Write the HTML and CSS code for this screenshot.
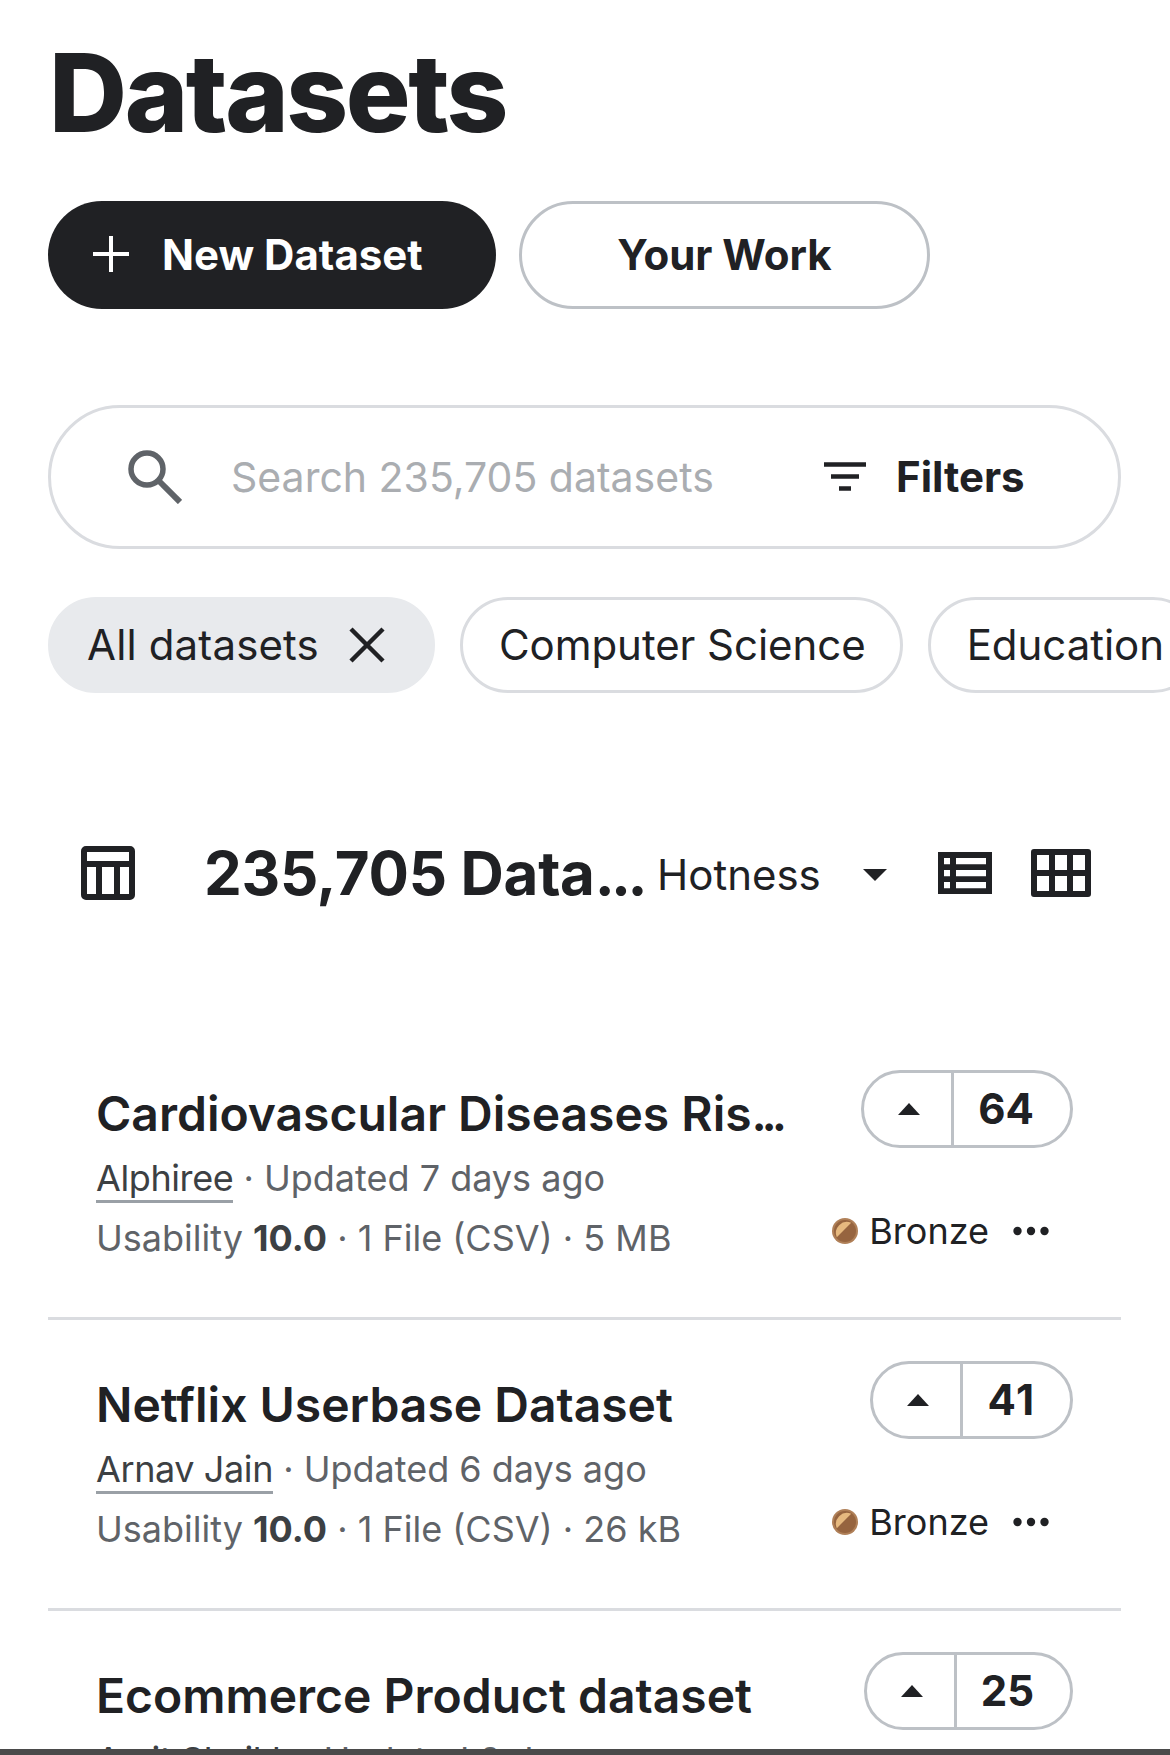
FILE: index.html
```html
<!DOCTYPE html>
<html lang="en">
<head>
<meta charset="utf-8">
<title>Datasets</title>
<link rel="stylesheet" href="styles.css">
</head>
<body>
<main class="page">
  <h1 class="page-title">Datasets</h1>
  <div class="actions">
    <button class="btn btn-primary">
      <svg class="btn-icon" viewBox="0 0 36 36"><path d="M18 0v36M0 18h36" fill="none" stroke="#fff" stroke-width="4"/></svg>
      New Dataset
    </button>
    <button class="btn btn-outline">Your Work</button>
  </div>
  <div class="search">
    <svg class="search-icon" viewBox="0 0 54 54"><circle cx="19" cy="19" r="16" fill="none" stroke="#5f6368" stroke-width="5.500"/><path d="M30.500 30.500L52 52" stroke="#5f6368" stroke-width="6" fill="none"/></svg>
    <span class="search-placeholder">Search 235,705 datasets</span>
    <span class="filters">
      <svg class="filter-icon" viewBox="0 0 42 30"><path d="M0 2.500h42M7 14.500h28M15 26.500h12" stroke="#202124" stroke-width="4.500" fill="none"/></svg>
      <span class="filters-label">Filters</span>
    </span>
  </div>
  <div class="chips">
    <span class="chip chip-active"><span class="chip-label">All datasets</span>
      <svg class="chip-x" viewBox="0 0 36 36"><path d="M2 2l32 32M34 2L2 34" stroke="#202124" stroke-width="4.500" fill="none"/></svg>
    </span>
    <span class="chip"><span class="chip-label">Computer Science</span></span>
    <span class="chip"><span class="chip-label">Education</span></span>
  </div>
  <div class="results-bar">
    <svg class="table-icon" viewBox="0 0 54 54"><path fill-rule="evenodd" d="M5 0h44a5 5 0 0 1 5 5v44a5 5 0 0 1-5 5H5a5 5 0 0 1-5-5V5a5 5 0 0 1 5-5zM6 6v9h42V6zM6 21v27h9V21zM21 21v27h12V21zM39 21v27h9V21z" fill="#202124"/></svg>
    <h2 class="results-title">235,705 Data<span class="dots-tight">...</span></h2>
    <span class="sort">Hotness</span>
    <svg class="sort-arrow" viewBox="0 0 24 12"><path d="M0 0h24L12 12z" fill="#202124"/></svg>
    <svg class="list-icon" viewBox="0 0 54 42"><path fill-rule="evenodd" d="M0 0h54v42H0zM6 6v6.300h6V6zM18 6v6.300h30V6zM6 18v6.300h6V18zM18 18v6.300h30V18zM6 30v6.300h6V30zM18 30v6.300h30V30z" fill="#202124"/></svg>
    <svg class="grid-icon" viewBox="0 0 60 48"><path fill-rule="evenodd" d="M3 0h54a3 3 0 0 1 3 3v42a3 3 0 0 1-3 3H3a3 3 0 0 1-3-3V3a3 3 0 0 1 3-3zM6 6v15h12V6zM24 6v15h12V6zM42 6v15h12V6zM6 27v15h12V27zM24 27v15h12V27zM42 27v15h12V27z" fill="#202124"/></svg>
  </div>
  <ul class="list">
    <li class="row">
      <div class="row-main">
        <div class="row-title">Cardiovascular Diseases Ris<span class="dots-tight">...</span></div>
        <div class="meta meta-first"><a class="author">Alphiree</a> · Updated 7 days ago</div>
        <div class="meta">Usability <b>10.0</b> · 1 File (CSV) · 5 MB</div>
      </div>
      <div class="row-side">
        <div class="vote"><span class="vote-up"><svg class="vote-arrow" viewBox="0 0 22 12"><path d="M11 0l11 12H0z" fill="#202124"/></svg></span><span class="vote-count">64</span></div>
        <div class="medal-line">
          <svg class="medal" viewBox="0 0 26 26"><circle cx="13" cy="13" r="13" fill="#b08058"/><circle cx="13" cy="13" r="11" fill="#96643f"/><path d="M4.800 19.200A11 11 0 0 1 19.200 4.800z" fill="#e6b97f"/></svg>
          <span class="medal-label">Bronze</span>
          <svg class="dots" viewBox="0 0 36 10"><circle cx="4.500" cy="5" r="4.200" fill="#202124"/><circle cx="18" cy="5" r="4.200" fill="#202124"/><circle cx="31.500" cy="5" r="4.200" fill="#202124"/></svg>
        </div>
      </div>
    </li>
    <li class="row">
      <div class="row-main">
        <div class="row-title">Netflix Userbase Dataset</div>
        <div class="meta meta-first"><a class="author">Arnav Jain</a> · Updated 6 days ago</div>
        <div class="meta">Usability <b>10.0</b> · 1 File (CSV) · 26 kB</div>
      </div>
      <div class="row-side">
        <div class="vote"><span class="vote-up"><svg class="vote-arrow" viewBox="0 0 22 12"><path d="M11 0l11 12H0z" fill="#202124"/></svg></span><span class="vote-count">41</span></div>
        <div class="medal-line">
          <svg class="medal" viewBox="0 0 26 26"><circle cx="13" cy="13" r="13" fill="#b08058"/><circle cx="13" cy="13" r="11" fill="#96643f"/><path d="M4.800 19.200A11 11 0 0 1 19.200 4.800z" fill="#e6b97f"/></svg>
          <span class="medal-label">Bronze</span>
          <svg class="dots" viewBox="0 0 36 10"><circle cx="4.500" cy="5" r="4.200" fill="#202124"/><circle cx="18" cy="5" r="4.200" fill="#202124"/><circle cx="31.500" cy="5" r="4.200" fill="#202124"/></svg>
        </div>
      </div>
    </li>
    <li class="row">
      <div class="row-main">
        <div class="row-title">Ecommerce Product dataset</div>
        <div class="meta meta-first"><a class="author">Amit Shaikh</a> · Updated 2 days ago</div>
      </div>
      <div class="row-side">
        <div class="vote"><span class="vote-up"><svg class="vote-arrow" viewBox="0 0 22 12"><path d="M11 0l11 12H0z" fill="#202124"/></svg></span><span class="vote-count">25</span></div>
      </div>
    </li>
  </ul>
</main>
<div class="bottom-bar"></div>
</body>
</html>
```
FILE: styles.css
```css
* { box-sizing: border-box; }
html, body { margin: 0; height: 100%; overflow: hidden; background: #fff; }
body { font-family: Inter, "Liberation Sans", sans-serif; color: #202124; }
.page { padding: 36px 49px 0 48px; }
.page-title { margin: 0; font-size: 108px; line-height: 114px; font-weight: 800; letter-spacing: -2.4px; padding-left: 1px; }
.actions { display: flex; gap: 23px; margin-top: 51px; }
.btn { height: 108px; border-radius: 54px; font: 650 42px Inter, sans-serif; display: flex; align-items: center; justify-content: center; padding: 0 0 2px; }
.btn-primary { width: 448px; background: #202124; color: #fff; border: 0; gap: 33px; justify-content: flex-start; padding-left: 45px; }
.btn-icon { width: 36px; height: 36px; }
.btn-outline { width: 411px; background: #fff; color: #202124; border: 3px solid #bdc1c6; }
.search { display: flex; align-items: center; height: 144px; margin-top: 96px; border: 3px solid #dadce0; border-radius: 72px; padding-left: 77px; }
.search-icon { width: 54px; height: 54px; }
.search-placeholder { margin-left: 49px; font-size: 41px; color: #aaadb1; width: 593px; }
.filters { display: flex; align-items: center; gap: 30px; font-size: 42px; font-weight: 650; }
.filters-label { margin-top: -2px; }
.filter-icon { width: 42px; height: 30px; }
.chips { display: flex; gap: 25px; margin-top: 48px; width: 1200px; }
.chip { display: flex; align-items: center; gap: 32px; height: 96px; padding: 0 34px 0 36px; border: 3px solid #dadce0; border-radius: 48px; font-size: 42px; white-space: nowrap; }
.chip-label { margin-top: -2px; letter-spacing: -0.05px; }
.chip-active { background: #e8eaed; border-color: #e8eaed; padding: 0 47px 0 36px; gap: 30px; }
.chip-active .chip-label { letter-spacing: 0.15px; }
.chip-x { width: 36px; height: 36px; }
.results-bar { display: flex; align-items: center; height: 60px; margin-top: 150px; padding-left: 33px; }
.table-icon { width: 54px; height: 54px; }
.results-title { margin: 0 0 0 69px; font-size: 60px; font-weight: 700; letter-spacing: -0.3px; width: 453px; white-space: nowrap; }
.dots-tight { letter-spacing: -0.06em; }
.row-title .dots-tight { letter-spacing: -0.11em; }
.sort { font-size: 42px; width: 205px; padding-top: 3px; }
.sort-arrow { width: 24px; height: 12px; margin-left: 1px; margin-top: 4px; }
.list-icon { width: 54px; height: 42px; margin-left: 51px; }
.grid-icon { width: 60px; height: 48px; margin-left: 39px; }
.list { list-style: none; margin: 126px 0 0; padding: 0; }
.row { display: flex; justify-content: space-between; height: 291px; padding: 41px 48px 0; border-bottom: 3px solid #dadce0; }
.row-main { padding-top: 8px; }
.row-title { font-size: 48px; font-weight: 600; line-height: 72px; white-space: nowrap; }
.meta { font-size: 36px; line-height: 60px; color: #5f6368; white-space: nowrap; }
.meta b { color: #3c4043; font-weight: 700; }
.meta-first { margin-top: -2px; }
.author { color: #3c4043; border-bottom: 3px solid #9aa0a6; letter-spacing: -0.4px; }
.row-side { display: flex; flex-direction: column; align-items: flex-end; }
.vote { display: flex; height: 78px; border: 3px solid #bdc1c6; border-radius: 39px; }
.vote-up { width: 90px; display: flex; align-items: center; justify-content: center; border-right: 3px solid #bdc1c6; padding-left: 3px; }
.vote-arrow { width: 22px; height: 12px; }
.vote-count { padding: 0 36px 0 24px; font-size: 42px; font-weight: 700; line-height: 72px; font-kerning: none; }
.medal-line { display: flex; align-items: center; margin-top: 61px; }
.medal { width: 26px; height: 26px; }
.medal-label { margin-left: 11px; font-size: 36px; }
.dots { width: 36px; height: 10px; margin-left: 24px; margin-right: 24px; }
.bottom-bar { position: fixed; left: 0; right: 0; bottom: 0; height: 6px; background: #4a4a4a; }
```
